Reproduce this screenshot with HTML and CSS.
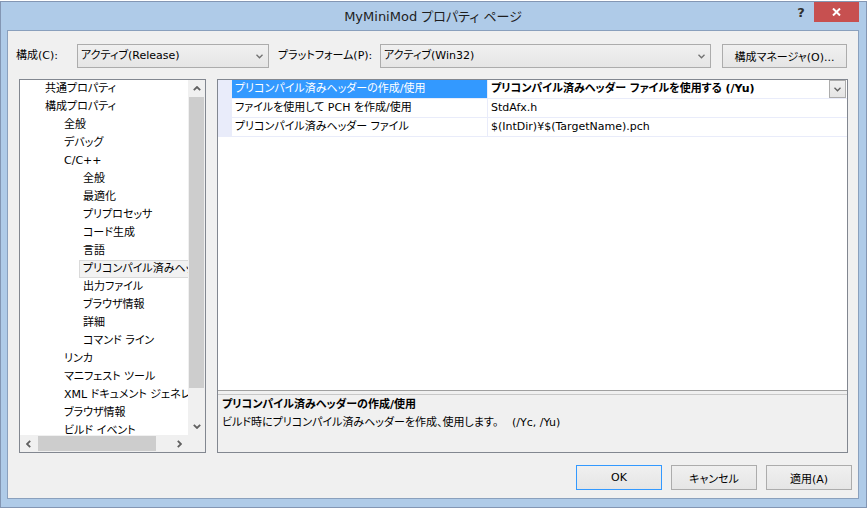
FILE: index.html
```html
<!DOCTYPE html>
<html lang="ja">
<head>
    <meta charset="UTF-8">
    <title>MyMiniMod プロパティ ページ</title>
    <link rel="stylesheet" href="styles.css">
</head>
<body>
    <div id="dialog">
        <div id="titlebar">
            <div></div>
            <div class="title">MyMiniMod プロパティ ページ</div>
            <div class="title-buttons">
                <span class="help">?</span>
                <span class="close">
                    <svg width="9" height="8" viewBox="0 0 9 8"><path d="M1 0.5 L8 7.5 M8 0.5 L1 7.5" stroke="#fff" stroke-width="2" fill="none"/></svg>
                </span>
            </div>
        </div>
        <div id="client">
            <div id="config-row">
                <span class="label label-config">構成(C):</span>
                <div class="combo combo-config">
                    <span>アクティブ(Release)</span>
                    <svg class="chev" width="7" height="5" viewBox="0 0 7 5"><path d="M0.5 0.8 L3.5 3.8 L6.5 0.8" stroke="#707070" stroke-width="1.3" fill="none"/></svg>
                </div>
                <span class="label label-platform">プラットフォーム(P):</span>
                <div class="combo combo-platform">
                    <span>アクティブ(Win32)</span>
                    <svg class="chev" width="7" height="5" viewBox="0 0 7 5"><path d="M0.5 0.8 L3.5 3.8 L6.5 0.8" stroke="#707070" stroke-width="1.3" fill="none"/></svg>
                </div>
                <button class="btn btn-manager">構成マネージャ(O)...</button>
            </div>

            <div id="panels">
                <div id="tree">
                    <div class="tree-items">
                        <div class="tree-item"><span class="node">共通プロパティ</span></div>
                        <div class="tree-item"><span class="node">構成プロパティ</span></div>
                        <div class="tree-item l1"><span class="node">全般</span></div>
                        <div class="tree-item l1"><span class="node">デバッグ</span></div>
                        <div class="tree-item l1"><span class="node">C/C++</span></div>
                        <div class="tree-item l2"><span class="node">全般</span></div>
                        <div class="tree-item l2"><span class="node">最適化</span></div>
                        <div class="tree-item l2"><span class="node">プリプロセッサ</span></div>
                        <div class="tree-item l2"><span class="node">コード生成</span></div>
                        <div class="tree-item l2"><span class="node">言語</span></div>
                        <div class="tree-item l2"><span class="node selected">プリコンパイル済みヘッダー</span></div>
                        <div class="tree-item l2"><span class="node">出力ファイル</span></div>
                        <div class="tree-item l2"><span class="node">ブラウザ情報</span></div>
                        <div class="tree-item l2"><span class="node">詳細</span></div>
                        <div class="tree-item l2"><span class="node">コマンド ライン</span></div>
                        <div class="tree-item l1"><span class="node">リンカ</span></div>
                        <div class="tree-item l1"><span class="node">マニフェスト ツール</span></div>
                        <div class="tree-item l1"><span class="node">XML ドキュメント ジェネレーター</span></div>
                        <div class="tree-item l1"><span class="node">ブラウザ情報</span></div>
                        <div class="tree-item l1"><span class="node">ビルド イベント</span></div>
                        <div class="tree-item l1"><span class="node">カスタム ビルド ステップ</span></div>
                    </div>
                    <div class="vscroll">
                        <div class="sb-btn"><svg width="8" height="5" viewBox="0 0 8 5"><path d="M0.8 4.2 L4 1 L7.2 4.2" stroke="#606060" stroke-width="1.8" fill="none"/></svg></div>
                        <div class="vthumb"></div>
                        <div class="sb-track"></div>
                        <div class="sb-btn"><svg width="8" height="5" viewBox="0 0 8 5"><path d="M0.8 0.8 L4 4 L7.2 0.8" stroke="#606060" stroke-width="1.8" fill="none"/></svg></div>
                    </div>
                    <div class="hscroll">
                        <div class="sb-btn"><svg width="5" height="8" viewBox="0 0 5 8"><path d="M4.2 0.8 L1 4 L4.2 7.2" stroke="#606060" stroke-width="1.8" fill="none"/></svg></div>
                        <div class="hthumb"></div>
                        <div class="sb-track"></div>
                        <div class="sb-btn"><svg width="5" height="8" viewBox="0 0 5 8"><path d="M0.8 0.8 L4 4 L0.8 7.2" stroke="#606060" stroke-width="1.8" fill="none"/></svg></div>
                    </div>
                    <div class="sb-corner"></div>
                </div>

                <div id="props">
                    <div class="grid">
                        <div class="prop-row">
                            <div class="gutter"></div>
                            <div class="prop-name active">プリコンパイル済みヘッダーの作成/使用</div>
                            <div class="prop-value bold">
                                <span>プリコンパイル済みヘッダー ファイルを使用する (/Yu)</span>
                                <span class="drop-btn"><svg width="7" height="5" viewBox="0 0 7 5"><path d="M0.5 0.8 L3.5 3.8 L6.5 0.8" stroke="#606060" stroke-width="1.3" fill="none"/></svg></span>
                            </div>
                        </div>
                        <div class="prop-row">
                            <div class="gutter"></div>
                            <div class="prop-name">ファイルを使用して PCH を作成/使用</div>
                            <div class="prop-value">StdAfx.h</div>
                        </div>
                        <div class="prop-row">
                            <div class="gutter"></div>
                            <div class="prop-name">プリコンパイル済みヘッダー ファイル</div>
                            <div class="prop-value">$(IntDir)¥$(TargetName).pch</div>
                        </div>
                    </div>
                    <div class="splitter"></div>
                    <div class="desc">
                        <div class="desc-title">プリコンパイル済みヘッダーの作成/使用</div>
                        <div class="desc-text"><span class="desc-main">ビルド時にプリコンパイル済みヘッダーを作成、使用します。</span>(/Yc, /Yu)</div>
                    </div>
                </div>
            </div>

            <div id="buttons">
                <button class="btn btn-default">OK</button>
                <button class="btn">キャンセル</button>
                <button class="btn">適用(A)</button>
            </div>
        </div>
    </div>
</body>
</html>
```

FILE: styles.css
```css
* {
    box-sizing: border-box;
}
body {
    margin: 0;
    background: #fff;
    font-family: "DejaVu Sans", "Noto Sans CJK JP", sans-serif;
    font-size: 11px;
    color: #000;
    font-feature-settings: "palt";
}
/* ウィンドウ枠 */
#dialog {
    margin-top: 1px;
    width: 867px;
    height: 507px;
    border: 1px solid #8396b3;
    background: #afcbe8;
    padding: 0 7px 8px 6px;
    display: flex;
    flex-direction: column;
}
#titlebar {
    height: 28px;
    display: grid;
    grid-template-columns: 1fr auto 1fr;
}
#titlebar .title {
    font-size: 13px;
    line-height: 30px;
    color: #1e1e1e;
}
.title-buttons {
    display: flex;
    justify-content: flex-end;
    align-items: flex-start;
}
.help {
    width: 26px;
    height: 20px;
    line-height: 22px;
    text-align: center;
    font-weight: bold;
    font-size: 13px;
    color: #303030;
}
.close {
    width: 45px;
    height: 20px;
    background: #c75050;
    display: flex;
    align-items: center;
    justify-content: center;
}
#client {
    flex: 1;
    background: #f0f0f0;
    border: 1px solid #8aa0bd;
    display: flex;
    flex-direction: column;
}
/* 構成の行 */
#config-row {
    margin-top: 13px;
    height: 24px;
    padding-left: 8px;
    display: flex;
    align-items: center;
}
.label {
    line-height: 24px;
    white-space: nowrap;
}
.label-config {
    width: 61px;
}
.label-platform {
    width: 102px;
    margin-left: 9px;
}
.combo {
    height: 24px;
    border: 1px solid #acacac;
    background: linear-gradient(#f0f0f0, #e5e5e5);
    display: flex;
    align-items: center;
    justify-content: space-between;
    padding: 0 5px 0 3px;
    line-height: 22px;
}
.combo-config {
    width: 192px;
}
.combo-platform {
    width: 331px;
}
.btn {
    font-family: inherit;
    font-size: 11px;
    font-feature-settings: "palt";
    color: #000;
    height: 24px;
    border: 1px solid #acacac;
    background: linear-gradient(#f0f0f0, #e5e5e5);
    padding: 0;
}
.btn-manager {
    width: 125px;
    margin-left: 11px;
}
.btn-default {
    border-color: #3399ff;
}
/* パネル */
#panels {
    margin-top: 11px;
    height: 374px;
    padding-left: 11px;
    display: flex;
    gap: 11px;
}
#tree {
    width: 187px;
    border: 1px solid #828790;
    background: #fff;
    display: grid;
    grid-template-columns: 168px 17px;
    grid-template-rows: 355px 17px;
}
.tree-items {
    overflow: hidden;
    white-space: nowrap;
}
.tree-item {
    height: 18px;
    padding-left: 21px;
}
.tree-item.l1 {
    padding-left: 40px;
}
.tree-item.l2 {
    padding-left: 59px;
}
.node {
    display: inline-block;
    height: 18px;
    line-height: 16px;
    padding: 0 3px;
    border: 1px solid transparent;
}
.node.selected {
    background: #f2f2f2;
    border-color: #dadada;
}
.vscroll {
    background: #f0f0f0;
    display: flex;
    flex-direction: column;
}
.hscroll {
    background: #f0f0f0;
    display: flex;
}
.sb-btn {
    width: 17px;
    height: 17px;
    flex: none;
    display: flex;
    align-items: center;
    justify-content: center;
}
.sb-track {
    flex: 1;
}
.vthumb {
    height: 291px;
    margin: 0 1px;
    background: #cdcdcd;
}
.hthumb {
    width: 118px;
    margin: 1px 0 1px 1px;
    background: #cdcdcd;
}
.sb-corner {
    background: #f0f0f0;
}
#props {
    width: 631px;
    border: 1px solid #828790;
    display: flex;
    flex-direction: column;
}
.grid {
    height: 310px;
    background: #fff;
}
.prop-row {
    height: 19px;
    display: flex;
    border-bottom: 1px solid #e9ecfa;
    white-space: nowrap;
}
.gutter {
    width: 14px;
    background: #e9ecfa;
}
.prop-name {
    width: 256px;
    padding-left: 3px;
    line-height: 18px;
    border-right: 1px solid #e9ecfa;
}
.prop-name.active {
    background: #3399ff;
    color: #fff;
}
.prop-value {
    flex: 1;
    padding-left: 3px;
    line-height: 18px;
    display: flex;
    justify-content: space-between;
}
.bold {
    font-weight: bold;
}
.drop-btn {
    width: 17px;
    height: 18px;
    margin-right: 1px;
    border: 1px solid #acacac;
    background: linear-gradient(#f0f0f0, #e5e5e5);
    display: flex;
    align-items: center;
    justify-content: center;
}
.splitter {
    height: 5px;
    border-top: 1px solid #a0a0a0;
    border-bottom: 1px solid #c8c8c8;
    background: #f0f0f0;
}
.desc {
    flex: 1;
    padding: 1px 4px;
    line-height: 18px;
}
.desc-title {
    font-weight: bold;
}
.desc-text {
    white-space: nowrap;
}
.desc-main {
    display: inline-block;
    width: 290px;
}
/* 下のボタン */
#buttons {
    margin-top: 12px;
    padding-right: 6px;
    display: flex;
    justify-content: flex-end;
    gap: 9px;
}
#buttons .btn {
    width: 86px;
    height: 25px;
}
```
